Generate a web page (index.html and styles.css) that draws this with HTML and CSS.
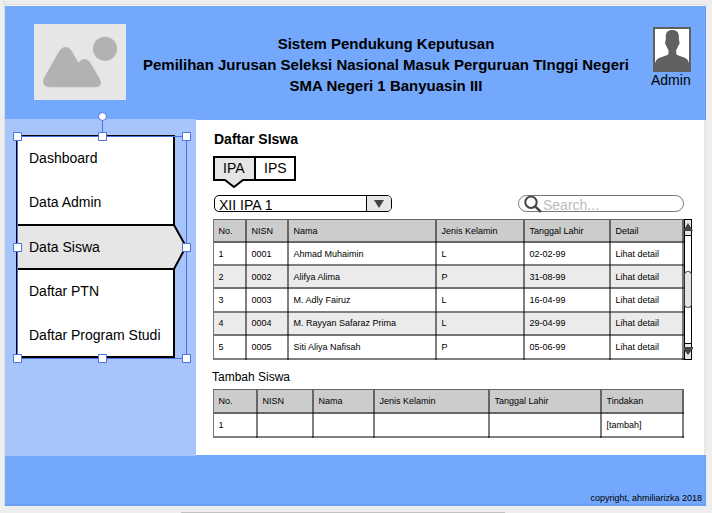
FILE: index.html
```html
<!DOCTYPE html>
<html lang="id">
<head>
<meta charset="utf-8">
<title>Daftar Siswa</title>
<link rel="stylesheet" href="styles.css">
</head>
<body>
<div class="page">
  <header class="header">
    <svg class="logo" width="92" height="76" viewBox="0 0 92 76">
      <rect width="92" height="76" fill="#e6e6e6"/>
      <circle cx="71" cy="24.800" r="12.100" fill="#b2b2b2"/>
      <path fill="#b2b2b2" d="M16 63.300C10 63.300 7.500 58.500 10.200 53.500L25 27.500C28.500 21.500 34.500 21.500 38 27.500L44.600 38.800C47.500 33.800 53.500 33.800 56.500 39L65.800 55C68.500 59.500 66.500 63.300 61.500 63.300Z"/>
    </svg>
    <h1 class="title">Sistem Pendukung Keputusan<br>Pemilihan Jurusan Seleksi Nasional Masuk Perguruan TInggi Negeri<br>SMA Negeri 1 Banyuasin III</h1>
    <div class="user">
      <svg class="avatar" width="38" height="45" viewBox="0 0 38 45">
        <rect x="1" y="1" width="36" height="43" fill="#fff" stroke="#606060" stroke-width="2"/>
        <path fill="#606060" d="M19.300 3C15 3 12.500 5.500 12.800 10V13.500Q11.800 13.500 12.300 17Q12.800 19 13.600 19Q14 21.500 15.500 23V26.500Q15.300 27.800 13 28.500L6 31Q2.800 32.500 2 36V44H36V36Q35.300 32.500 32.500 31L25.500 28.500Q23.300 27.800 23.200 26.500V23Q24.600 21.500 25 19Q25.900 19 26.400 17Q26.800 13.500 25.900 13.500V10C26 5.500 23.600 3 19.300 3Z"/>
      </svg>
      <span>Admin</span>
    </div>
  </header>

  <div class="body">
    <aside class="sidebar">
      <nav class="menu">
        <a>Dashboard</a>
        <a>Data Admin</a>
        <a class="active">Data Siswa</a>
        <a>Daftar PTN</a>
        <a>Daftar Program Studi</a>
        <svg class="frame" width="191" height="260" viewBox="0 107 191 260">
          <path d="M12 130H169V219L181.500 241.500L169 264V352H12Z" fill="#fff"/>
          <path d="M12 219H169L181.500 241.500L169 264H12Z" fill="#e6e6e6"/>
          <path d="M12 131H169V220L181 241.500L169 264V352H12M12 220H169M12 264H169" fill="none" stroke="#000" stroke-width="2"/>
          <path d="M11.500 130V353" stroke="#000"/>
          <path d="M12.500 131.500H181.500V353.500H12.500ZM97.500 131V111" fill="none" stroke="#4a72e0"/>
          <circle cx="97.500" cy="111.500" r="4" fill="#fff" stroke="#4a72e0"/>
          <g fill="#fff" stroke="#4a72e0">
            <path d="M8.500 127.500h8v8h-8zM93.500 127.500h8v8h-8zM177.500 127.500h8v8h-8zM8.500 238.500h8v8h-8zM177.500 238.500h8v8h-8zM8.500 349.500h8v8h-8zM93.500 349.500h8v8h-8zM177.500 349.500h8v8h-8z"/>
          </g>
        </svg>
      </nav>
    </aside>

    <main class="content">
      <h2 class="heading">Daftar SIswa</h2>
      <div class="tabs">
        <span class="tab tab-active">IPA<svg class="pointer" width="26" height="11" viewBox="0 0 26 11"><path d="M2 1L3.500 2.500L13 9L22.500 2.500L24 1Z" fill="#e6e6e6"/><path d="M2 2H4L13 9L22 2H24" fill="none" stroke="#000" stroke-width="2"/></svg></span>
        <span class="tab">IPS</span>
      </div>
      <div class="filters">
        <div class="select"><span>XII IPA 1</span><i><svg width="10" height="8" viewBox="0 0 10 8"><path d="M0 0H10L5 8Z" fill="#444"/></svg></i></div>
        <div class="search">
          <svg width="19" height="18" viewBox="0 0 19 18"><circle cx="7" cy="6.300" r="5.700" fill="none" stroke="#444" stroke-width="2"/><path d="M11 10.300L17 15.800" stroke="#444" stroke-width="2.400"/></svg>
          <span>Search...</span>
        </div>
      </div>

      <div class="list">
        <table class="grid students">
          <colgroup><col class="w34"><col class="w42"><col class="w148"><col class="w88"><col class="w86"><col class="w73"></colgroup>
          <tr class="tall"><th>No.</th><th>NISN</th><th>Nama</th><th>Jenis Kelamin</th><th>Tanggal Lahir</th><th>Detail</th></tr>
          <tr><td>1</td><td>0001</td><td>Ahmad Muhaimin</td><td>L</td><td>02-02-99</td><td>Lihat detail</td></tr>
          <tr class="alt"><td>2</td><td>0002</td><td>Alifya Alima</td><td>P</td><td>31-08-99</td><td>Lihat detail</td></tr>
          <tr><td>3</td><td>0003</td><td>M. Adly Fairuz</td><td>L</td><td>16-04-99</td><td>Lihat detail</td></tr>
          <tr class="alt"><td>4</td><td>0004</td><td>M. Rayyan Safaraz Prima</td><td>L</td><td>29-04-99</td><td>Lihat detail</td></tr>
          <tr class="tall"><td>5</td><td>0005</td><td>Siti Aliya Nafisah</td><td>P</td><td>05-06-99</td><td>Lihat detail</td></tr>
        </table>
        <svg class="scroll" width="10" height="141" viewBox="0 0 10 141">
          <rect x=".5" y=".5" width="7" height="140" fill="#fff" stroke="#000"/>
          <path d="M1 1H7V16H1ZM1 125H7V140H1Z" fill="#e6e6e6"/>
          <path d="M0 16.500H8M0 124.500H8" stroke="#000"/>
          <rect x=".5" y="52.500" width="7" height="36" rx="3" fill="#e6e6e6" stroke="#333"/>
          <path d="M4 4L9 12H-1Z" fill="#444"/>
          <path d="M4 136L-1 129.500V128H9V129.500Z" fill="#444"/>
        </svg>
      </div>

      <h3 class="subheading">Tambah Siswa</h3>
      <table class="grid add">
        <colgroup><col class="w45"><col class="w56"><col class="w61"><col class="w115"><col class="w112"><col class="w82"></colgroup>
        <tr><th>No.</th><th>NISN</th><th>Nama</th><th>Jenis Kelamin</th><th>Tanggal Lahir</th><th>Tindakan</th></tr>
        <tr><td>1</td><td></td><td></td><td></td><td></td><td>[tambah]</td></tr>
      </table>
    </main>
  </div>

  <footer class="footer">copyright, ahmiliarizka 2018</footer>
</div>
<div class="hscroll"></div>
</body>
</html>
```
FILE: styles.css
```css
* { box-sizing: border-box; }

body {
  margin: 0;
  height: 513px;
  overflow: hidden;
  background: #eee;
  color: #000;
  font: 14px/20px "Liberation Sans", Arial, sans-serif;
}

h1, h2, h3 { margin: 0; }
svg { display: block; }

.page {
  width: 702px;
  margin-left: 4px;
  padding-top: 6px;
  border-left: 1px solid #ddd;
  background: linear-gradient(#eee 4px, #ddd 4px, #ddd 5px, #f4f4f4 5px, #f4f4f4 6px, transparent 6px);
}

.header {
  display: flex;
  align-items: flex-start;
  height: 114px;
  padding: 18px 0 0 29px;
  border-right: 1px solid #6899e6;
  background: #74a8fc;
}

.title {
  width: 486px;
  margin: 9px 0 0 17px;
  font-size: 15px;
  line-height: 21px;
  text-align: center;
  white-space: nowrap;
}

.user {
  display: flex;
  flex-direction: column;
  width: 42px;
  margin: 3px 0 0 22px;
  line-height: 16px;
}

.avatar { margin-left: 2px; }

.body {
  display: flex;
  height: 335px;
  border-right: 2px solid #e6e6e6;
  background: #fff;
}

.sidebar {
  width: 191px;
  height: 337px;
  margin-top: -1px;
  padding: 17px 0 0 12px;
  background: #a8c5fb;
  position: relative;
  z-index: 1;
}

.menu {
  position: relative;
  display: grid;
  grid-template-rows: 44px 44px 46px 42px 46px;
}

.menu a {
  display: flex;
  align-items: center;
  padding-left: 12px;
}

.frame {
  position: absolute;
  left: -12px;
  top: -24px;
  z-index: -1;
}

.content { padding: 10px 0 0 17px; }

.heading {
  padding-left: 1px;
  font-size: 14px;
  line-height: 18px;
}

.tabs {
  display: flex;
  width: 83px;
  height: 25px;
  margin-top: 8px;
  border: 2px solid #000;
}

.tab {
  width: 38px;
  padding: 0 0 0 8px;
  line-height: 20px;
}

.tab-active {
  position: relative;
  width: 41px;
  border-right: 2px solid #000;
  background: #e6e6e6;
}

.pointer {
  position: absolute;
  left: 6px;
  top: 20px;
}

.filters {
  display: flex;
  justify-content: space-between;
  width: 471px;
  margin-top: 14px;
}

.select {
  display: flex;
  justify-content: space-between;
  width: 178px;
  height: 17px;
  margin-left: 1px;
  border: 1px solid #000;
  border-radius: 5px;
  overflow: hidden;
}

.select span { padding-left: 4px; line-height: 19px; }

.select i {
  display: flex;
  align-items: center;
  justify-content: center;
  width: 25px;
  border-left: 1px solid #000;
  background: #e6e6e6;
}

.search {
  display: flex;
  width: 166px;
  height: 17px;
  padding-left: 5px;
  border: 1px solid #777;
  border-radius: 9px;
  color: #bbb;
  line-height: 19px;
}

.list { display: flex; margin-top: 7px; }

.grid {
  table-layout: fixed;
  width: 471px;
  border-spacing: 0;
  font-size: 9px;
  line-height: 12px;
}

.grid th, .grid td {
  height: 23px;
  padding: 0 0 2px 4.5px;
  box-shadow: inset -2px 0 rgba(0, 0, 0, .5), inset 0 -2px rgba(0, 0, 0, .5);
  text-align: left;
  font-weight: normal;
  white-space: nowrap;
}

.grid .tall th, .grid .tall td { height: 24px; }
.grid tr { background: #fff; }
.grid tr.alt { background: #ebebeb; }
.grid tr:first-child { background: #ccc; }

.grid th { border-top: 1px solid #666; }
.grid th:first-child, .grid td:first-child { border-left: 1px solid #777; }

.grid.add th { height: 25px; }
.grid.add td { height: 24px; }

.w34 { width: 34px; }
.w42 { width: 42px; }
.w148 { width: 148px; }
.w88 { width: 88px; }
.w86 { width: 86px; }
.w73 { width: 73px; }
.w45 { width: 45px; }
.w56 { width: 56px; }
.w61 { width: 61px; }
.w115 { width: 115px; }
.w112 { width: 112px; }
.w82 { width: 82px; }

.subheading {
  margin: 9px 0 4px -1px;
  font-size: 12px;
  font-weight: normal;
  line-height: 16px;
}

.footer {
  height: 51px;
  padding: 37px 3px 0 0;
  border: solid #6c9eef;
  border-width: 0 1px 2px 0;
  background: #74a8fc;
  font-size: 9px;
  line-height: 12px;
  text-align: right;
}

.hscroll {
  width: 324px;
  height: 1px;
  margin: 6px 0 0 181px;
  background: #c1c1c1;
}
```
